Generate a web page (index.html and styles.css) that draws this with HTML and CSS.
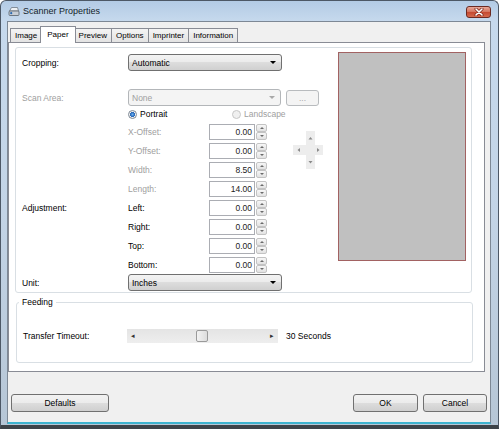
FILE: index.html
```html
<!DOCTYPE html>
<html>
<head>
<meta charset="utf-8">
<title>Scanner Properties</title>
<link rel="stylesheet" href="styles.css">
</head>
<body>
<div class="window">
  <div class="titlebar">
    <svg class="app-icon" width="12" height="12" viewBox="0 0 12 12">
      <path d="M1.5 6 L3.5 2.5 H9.5 L10.5 6 Z" fill="#eef1f4" stroke="#6f7984" stroke-width="0.8"/>
      <rect x="1" y="6" width="10" height="4.5" rx="1" fill="#c7ced6" stroke="#56606a" stroke-width="0.8"/>
      <circle cx="3.2" cy="8.2" r="1.1" fill="#2a69b0"/>
    </svg>
    <span class="title">Scanner Properties</span>
    <div class="close">
      <svg width="10" height="8" viewBox="0 0 10 8">
        <path d="M2 1 L8 7 M8 1 L2 7" stroke="#7a2418" stroke-width="3" stroke-linecap="round"/>
        <path d="M2 1 L8 7 M8 1 L2 7" stroke="#ffffff" stroke-width="1.6" stroke-linecap="round"/>
      </svg>
    </div>
  </div>

  <div class="client">
    <div class="tabs">
      <div class="tab">Image</div>
      <div class="tab active">Paper</div>
      <div class="tab">Preview</div>
      <div class="tab">Options</div>
      <div class="tab">Imprinter</div>
      <div class="tab">Information</div>
    </div>

    <div class="panel">
      <div class="main-box">
        <div class="form">
          <div class="row tall first">
            <span class="lbl">Cropping:</span>
            <div class="combo"><span>Automatic</span><i class="caret"></i></div>
          </div>
          <div class="row tall scan">
            <span class="lbl off">Scan Area:</span>
            <div class="combo off narrow"><span>None</span><i class="caret"></i></div>
            <div class="dots">...</div>
          </div>
          <div class="row orient">
            <span class="lbl"></span>
            <label class="opt portrait"><i class="radio checked"></i>Portrait</label>
            <label class="opt off"><i class="radio disabled"></i>Landscape</label>
          </div>

          <div class="offsets">
            <div class="offset-rows">
              <div class="row">
                <span class="lbl"></span><span class="sublbl off">X-Offset:</span>
                <div class="num">0.00</div><div class="spin"><i class="up"></i><i class="down"></i></div>
              </div>
              <div class="row">
                <span class="lbl"></span><span class="sublbl off">Y-Offset:</span>
                <div class="num">0.00</div><div class="spin"><i class="up"></i><i class="down"></i></div>
              </div>
              <div class="row">
                <span class="lbl"></span><span class="sublbl off">Width:</span>
                <div class="num">8.50</div><div class="spin"><i class="up"></i><i class="down"></i></div>
              </div>
              <div class="row">
                <span class="lbl"></span><span class="sublbl off">Length:</span>
                <div class="num">14.00</div><div class="spin"><i class="up"></i><i class="down"></i></div>
              </div>
            </div>
            <svg class="cross" width="30" height="38" viewBox="0 0 30 38">
              <rect x="13" y="0" width="9" height="38" fill="#ededed"/>
              <rect x="0" y="14" width="30" height="10" fill="#ededed"/>
              <polygon points="15.5,8.5 19.5,8.5 17.5,6" fill="#8a8a8a"/>
              <polygon points="15.5,30 19.5,30 17.5,32.5" fill="#8a8a8a"/>
              <polygon points="7,17 7,21 4.5,19" fill="#8a8a8a"/>
              <polygon points="24,17 24,21 26.5,19" fill="#8a8a8a"/>
            </svg>
          </div>

          <div class="row">
            <span class="lbl">Adjustment:</span><span class="sublbl">Left:</span>
            <div class="num">0.00</div><div class="spin"><i class="up"></i><i class="down"></i></div>
          </div>
          <div class="row">
            <span class="lbl"></span><span class="sublbl">Right:</span>
            <div class="num">0.00</div><div class="spin"><i class="up"></i><i class="down"></i></div>
          </div>
          <div class="row">
            <span class="lbl"></span><span class="sublbl">Top:</span>
            <div class="num">0.00</div><div class="spin"><i class="up"></i><i class="down"></i></div>
          </div>
          <div class="row">
            <span class="lbl"></span><span class="sublbl">Bottom:</span>
            <div class="num">0.00</div><div class="spin"><i class="up"></i><i class="down"></i></div>
          </div>
          <div class="row tall unit">
            <span class="lbl">Unit:</span>
            <div class="combo"><span>Inches</span><i class="caret"></i></div>
          </div>
        </div>
        <div class="preview"></div>
      </div>

      <fieldset class="feeding">
        <legend>Feeding</legend>
        <div class="timeout-row">
          <span class="tlabel">Transfer Timeout:</span>
          <div class="slider">
            <span class="sarrow">&#9666;</span>
            <div class="track"><div class="thumb"></div></div>
            <span class="sarrow">&#9656;</span>
          </div>
          <span class="seconds">30 Seconds</span>
        </div>
      </fieldset>
    </div>

    <div class="buttons">
      <div class="btn defaults">Defaults</div>
      <div class="btn ok">OK</div>
      <div class="btn cancel">Cancel</div>
    </div>
  </div>
</div>
</body>
</html>
```

FILE: styles.css
```css
html, body {
  margin: 0;
  padding: 0;
  background: #ffffff;
}

body {
  font-family: "Liberation Sans", Arial, sans-serif;
  font-size: 8.5px;
  color: #000;
}

.window {
  width: 499px;
  height: 429px;
  box-sizing: border-box;
  border: 1px solid #4d5866;
  border-bottom: 4px solid #3d4349;
  border-radius: 6px 6px 0 0;
  padding: 0 7px 1px 6px;
  background: linear-gradient(#b3cbe5 0, #c6d9ed 20px, #c3d4e6 50%, #b6c6d6 100%);
  display: flex;
  flex-direction: column;
}

/* ---------- title bar ---------- */
.titlebar {
  height: 20px;
  display: flex;
  align-items: center;
}

.app-icon {
  margin-left: 1px;
  flex: none;
}

.title {
  margin-left: 3px;
  font-size: 9px;
  color: #141e2a;
}

.close {
  margin-left: auto;
  align-self: flex-start;
  margin-top: 5px;
  width: 25px;
  height: 12px;
  box-sizing: border-box;
  border: 1px solid #6b2a22;
  border-radius: 3px;
  background: linear-gradient(#e9a898 0, #d67862 45%, #c4472f 50%, #d56a4d 100%);
  display: flex;
  align-items: center;
  justify-content: center;
}

/* ---------- client ---------- */
.client {
  flex: 1;
  background: #f0f0f0;
  border: 1px solid #7d8895;
  border-bottom: 2px solid #3db3cf;
  display: flex;
  flex-direction: column;
}

.tabs {
  display: flex;
  align-items: flex-end;
  height: 16px;
  padding: 4px 0 0 3px;
  font-size: 8px;
}

.tab {
  height: 14px;
  box-sizing: border-box;
  line-height: 13px;
  padding: 0 4px;
  margin-left: -1px;
  border: 1px solid #898c95;
  border-bottom: none;
  background: linear-gradient(#f4f4f4, #e3e3e3);
}

.tab.active {
  height: 17px;
  margin: 0 -1px -1px -2px;
  padding: 0 6px;
  line-height: 15px;
  background: #ffffff;
  position: relative;
  z-index: 1;
}

.panel {
  height: 330px;
  box-sizing: border-box;
  margin-right: 5px;
  background: #ffffff;
  border: 1px solid #898c95;
  display: flex;
  flex-direction: column;
}

.main-box {
  height: 246px;
  box-sizing: border-box;
  margin: 4px 12px 0 6px;
  border: 1px solid #d9dfe4;
  border-radius: 3px;
  display: flex;
}

.form {
  flex: 1;
  padding-left: 6px;
  display: flex;
  flex-direction: column;
}

.row {
  display: flex;
  align-items: center;
  height: 16px;
  margin-top: 3px;
  flex: none;
}

.row.tall { height: 17px; }
.row.first { margin-top: 6px; }
.row.scan { margin-top: 18px; }
.row.orient { margin-top: 0; }
.row.unit { margin-top: 1px; }

.lbl {
  width: 106px;
  flex: none;
}

.sublbl {
  width: 81px;
  flex: none;
}

.off { color: #a0a0a0; }

/* combo boxes */
.combo {
  width: 154px;
  height: 17px;
  box-sizing: border-box;
  border: 1px solid #707070;
  border-radius: 3px;
  background: linear-gradient(#f3f3f3 0, #ebebeb 50%, #dddddd 50%, #d0d0d0 100%);
  display: flex;
  align-items: center;
  justify-content: space-between;
  padding: 0 5px 0 3px;
}

.combo.narrow { width: 153px; }

.combo.off {
  border-color: #b3b6b9;
  background: #f4f4f4;
}

.caret {
  width: 0;
  height: 0;
  border-left: 3px solid transparent;
  border-right: 3px solid transparent;
  border-top: 3px solid #000;
}

.combo.off .caret { border-top-color: #a8a8a8; }

.dots {
  width: 33px;
  height: 16px;
  box-sizing: border-box;
  margin-left: 5px;
  border: 1px solid #b8bbbe;
  border-radius: 3px;
  background: #f4f4f4;
  color: #a8a8a8;
  text-align: center;
  line-height: 14px;
}

/* radios */
.opt {
  display: flex;
  align-items: center;
}

.opt.portrait { width: 104px; }

.radio {
  width: 9px;
  height: 9px;
  box-sizing: border-box;
  border-radius: 50%;
  margin-right: 3px;
  border: 1px solid #7f8a96;
  background: radial-gradient(circle, #fff 0, #e8e8e8 100%);
}

.radio.checked {
  background: radial-gradient(circle, #6ab0f0 0, #2a68b8 45%, #f4f4f4 55%, #e0e0e0 100%);
}

.radio.disabled {
  border-color: #c7c7c7;
  background: #f0f0f0;
}

/* numeric inputs */
.offsets {
  display: flex;
  margin-top: 2px;
  flex: none;
}

.offset-rows {
  display: flex;
  flex-direction: column;
}

.offset-rows .row:first-child { margin-top: 0; }

.cross {
  margin: 7px 0 0 26px;
  flex: none;
}

.num {
  width: 46px;
  height: 16px;
  box-sizing: border-box;
  border: 1px solid #abadb3;
  background: #fff;
  text-align: right;
  padding-right: 2px;
  line-height: 14px;
  color: #222;
}

.spin {
  width: 11px;
  height: 16px;
  margin-left: 1px;
  display: flex;
  flex-direction: column;
}

.spin i {
  flex: 1;
  box-sizing: border-box;
  border: 1px solid #c3c3c3;
  border-radius: 2px;
  background: linear-gradient(#f7f7f7, #e2e2e2);
  display: flex;
  align-items: center;
  justify-content: center;
}

.spin i::before {
  content: "";
  width: 0;
  height: 0;
  border-left: 2px solid transparent;
  border-right: 2px solid transparent;
}

.spin .up::before { border-bottom: 2px solid #6a6a6a; }
.spin .down::before { border-top: 2px solid #6a6a6a; }

/* preview */
.preview {
  width: 128px;
  height: 209px;
  box-sizing: border-box;
  margin: 4px 5px 0 0;
  background: #c0c0c0;
  border: 1px solid #a26262;
  flex: none;
}

/* feeding */
.feeding {
  margin: 4px 11px 0 7px;
  padding: 0 6px 19px 6px;
  border: 1px solid #d9dfe4;
  border-radius: 3px;
  min-width: 0;
}

.feeding legend {
  margin-left: -4px;
  padding: 0 3px;
  line-height: 10px;
}

.timeout-row {
  display: flex;
  align-items: center;
  margin-top: 22px;
  height: 14px;
}

.tlabel {
  width: 104px;
  flex: none;
}

.slider {
  width: 151px;
  height: 14px;
  display: flex;
  align-items: center;
  background: linear-gradient(#e4e4e4, #eeeeee);
  flex: none;
}

.sarrow {
  width: 12px;
  text-align: center;
  font-size: 7px;
  color: #333;
  flex: none;
}

.track {
  flex: 1;
  display: flex;
  align-items: center;
}

.thumb {
  width: 12px;
  height: 12px;
  box-sizing: border-box;
  margin-left: 57px;
  border: 1px solid #9a9a9a;
  border-radius: 2px;
  background: linear-gradient(90deg, #f2f2f2, #dcdcdc);
}

.seconds {
  margin-left: 8px;
}

/* buttons */
.buttons {
  display: flex;
  margin-top: 22px;
  padding: 0 3px 0 3px;
}

.btn {
  height: 18px;
  box-sizing: border-box;
  border: 1px solid #707070;
  border-radius: 3px;
  background: linear-gradient(#f2f2f2 0, #ebebeb 50%, #dddddd 50%, #cfcfcf 100%);
  text-align: center;
  line-height: 16px;
}

.btn.defaults { width: 98px; }
.btn.ok { width: 65px; margin-left: auto; }
.btn.cancel { width: 64px; margin-left: 5px; }
```
